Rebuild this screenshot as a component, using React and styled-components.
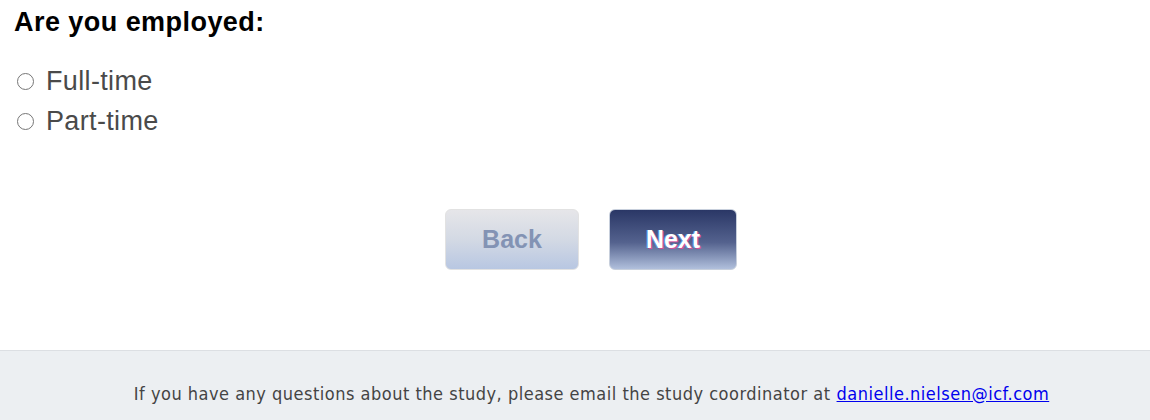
import React from 'react';
import styled, { createGlobalStyle } from 'styled-components';

const Global = createGlobalStyle`
  body {
    margin: 0;
    background: #fff;
    font-family: "Liberation Sans", Arial, sans-serif;
  }
`

const Page = styled.div`
  display: flex;
  flex-direction: column;
  height: 420px;
`

const Main = styled.div`
  flex: 1;
  padding: 6px 14px 0;
`

const Question = styled.h2`
  margin: 0;
  font-size: 27px;
  letter-spacing: 0.45px;
  font-weight: bold;
  color: #000;
  line-height: 32px;
`

const Options = styled.div`
  display: flex;
  flex-direction: column;
  gap: 4px;
  margin-top: 25px;
`

const Option = styled.label`
  display: flex;
  align-items: center;
  gap: 12px;
  font-size: 27px;
  letter-spacing: 0.35px;
  color: #4a4a4a;
  line-height: 36px;
`

const Radio = styled.span`
  width: 17px;
  height: 17px;
  margin-left: 3px;
  border: 1.3px solid #767676;
  border-radius: 50%;
  box-sizing: border-box;
`

const Buttons = styled.div`
  display: flex;
  justify-content: center;
  gap: 30px;
  margin-top: 70px;
  padding-left: 32px;
`

const Button = styled.button`
  width: ${p => p.$w}px;
  height: 61px;
  border-radius: 6px;
  font-family: "Liberation Sans", Arial, sans-serif;
  font-size: 25px;
  font-weight: bold;
  cursor: pointer;
  border: 1px solid ${p => (p.$primary ? '#c7cfdc' : '#e2e2e2')};
  color: ${p => (p.$primary ? '#fff' : '#8393b4')};
  background: ${p =>
    p.$primary
      ? 'linear-gradient(#2a3766 0%, #54628e 55%, #b0bfdc 100%)'
      : 'linear-gradient(#e6e6e9 0%, #d3d9e4 50%, #b8c7e2 100%)'};
  text-shadow: ${p => (p.$primary ? '1px 1px 0 #d24f9a, -1px 0 0 #5fa0e0' : 'none')};
`

const Footer = styled.footer`
  height: 70px;
  box-sizing: border-box;
  border-top: 1px solid #dcdfe3;
  background: #eceff2;
  display: flex;
  justify-content: center;
  align-items: center;
  padding: 16px 0 0 33px;
  font-family: "DejaVu Sans", Verdana, sans-serif;
  font-stretch: condensed;
  font-size: 18px;
  letter-spacing: 0.5px;
  color: #444;
`

const Mail = styled.a`
  color: #0000ee;
  text-decoration: underline;
  margin-left: 6px;
`

export default function App() {
  return (
    <Page>
      <Global />
      <Main>
        <Question>Are you employed:</Question>
        <Options>
          <Option><Radio />Full-time</Option>
          <Option><Radio />Part-time</Option>
        </Options>
        <Buttons>
          <Button $w={134}>Back</Button>
          <Button $w={128} $primary>Next</Button>
        </Buttons>
      </Main>
      <Footer>
        If you have any questions about the study, please email the study coordinator at
        <Mail href="#">danielle.nielsen@icf.com</Mail>
      </Footer>
    </Page>
  );
}
